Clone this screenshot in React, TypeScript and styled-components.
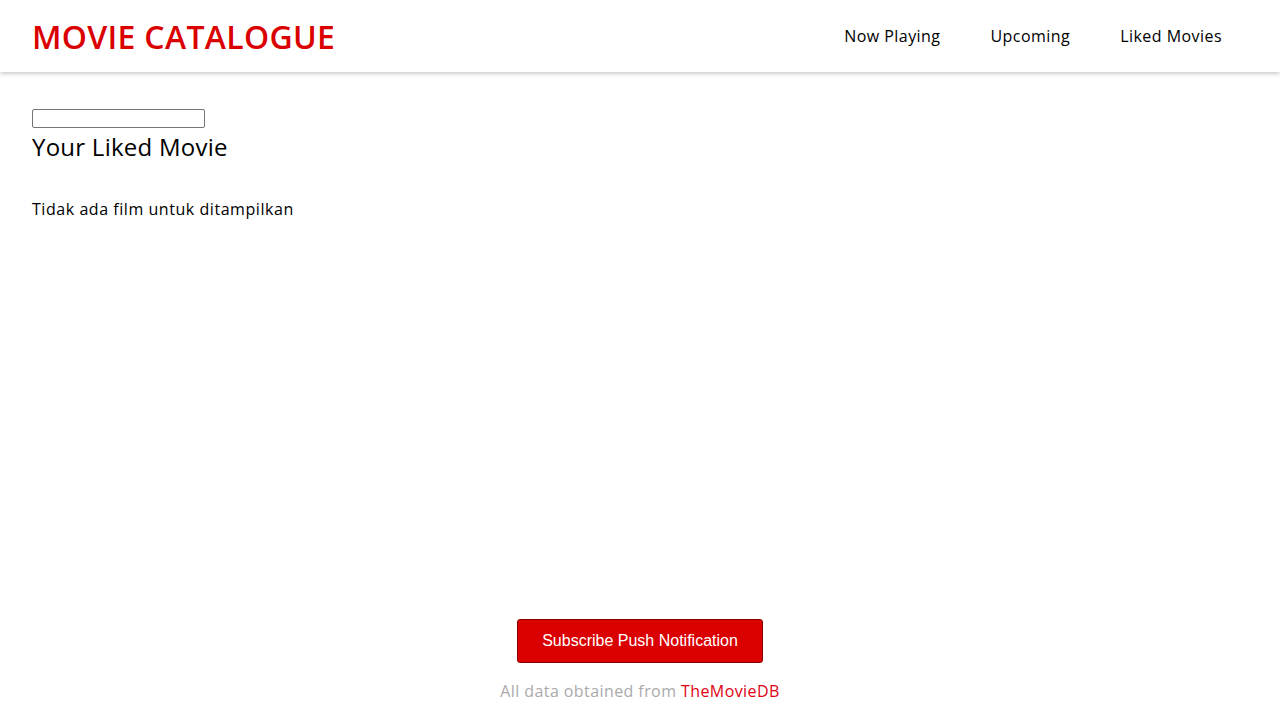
import React from "react";
import styled, { createGlobalStyle } from "styled-components";

const Global = createGlobalStyle`
  * { box-sizing: border-box; }
  html, body { margin: 0; padding: 0; }
  body { font-family: "Open Sans", "Noto Sans", sans-serif; color: #000; background: #fff; }
`;

const Page = styled.div`
  min-height: 100vh;
  display: flex;
  flex-direction: column;
`;

const Header = styled.header`
  height: 72px;
  display: flex;
  align-items: center;
  justify-content: space-between;
  padding: 0 32px;
  background: #fff;
  box-shadow: 0 2px 4px rgba(0, 0, 0, 0.2);
`;

const Brand = styled.h1`
  margin: 0;
  font-size: 32px;
  font-weight: 600;
  color: #db0000;
  letter-spacing: 0.3px;
`;

const Nav = styled.nav`
  display: flex;
  margin-right: 26px;
`;

const NavLink = styled.a`
  font-size: 16px;
  color: #000;
  text-decoration: none;
  padding: 0 0 0 50px;
  line-height: 24px;
  letter-spacing: 0.45px;
`;

const Main = styled.main`
  flex: 1;
  padding: 37px 32px 0;
  display: flex;
  flex-direction: column;
  align-items: flex-start;
`;

const SearchBox = styled.input`
  width: 173px;
  height: 19px;
  border: 1px solid #767676;
  border-radius: 2px;
  padding: 1px 2px;
  margin: 0;
`;

const Title = styled.h2`
  margin: 3px 0 0;
  font-size: 24px;
  font-weight: 400;
  line-height: 32px;
  letter-spacing: 0.25px;
`;

const Empty = styled.p`
  margin: 34px 0 0;
  font-size: 16px;
  line-height: 24px;
  letter-spacing: 0.55px;
`;

const Footer = styled.footer`
  display: flex;
  flex-direction: column;
  align-items: center;
  padding-bottom: 17px;
`;

const SubscribeButton = styled.button`
  width: 246px;
  height: 44px;
  background: #db0000;
  color: #fff;
  border: 1px solid #8a0000;
  border-radius: 3px;
  font-family: "Liberation Sans", Arial, sans-serif;
  font-size: 16px;
  cursor: pointer;
`;

const Credit = styled.p`
  margin: 16px 0 0;
  font-size: 16px;
  line-height: 24px;
  color: #aaaaaa;
  letter-spacing: 0.42px;
`;

const CreditLink = styled.a`
  color: #e00012;
  text-decoration: none;
`;

export default function App() {
  return (
    <Page>
      <Global />
      <Header>
        <Brand>MOVIE CATALOGUE</Brand>
        <Nav>
          <NavLink href="#">Now Playing</NavLink>
          <NavLink href="#">Upcoming</NavLink>
          <NavLink href="#">Liked Movies</NavLink>
        </Nav>
      </Header>
      <Main>
        <SearchBox type="text" />
        <Title>Your Liked Movie</Title>
        <Empty>Tidak ada film untuk ditampilkan</Empty>
      </Main>
      <Footer>
        <SubscribeButton>Subscribe Push Notification</SubscribeButton>
        <Credit>
          All data obtained from <CreditLink href="#">TheMovieDB</CreditLink>
        </Credit>
      </Footer>
    </Page>
  );
}
